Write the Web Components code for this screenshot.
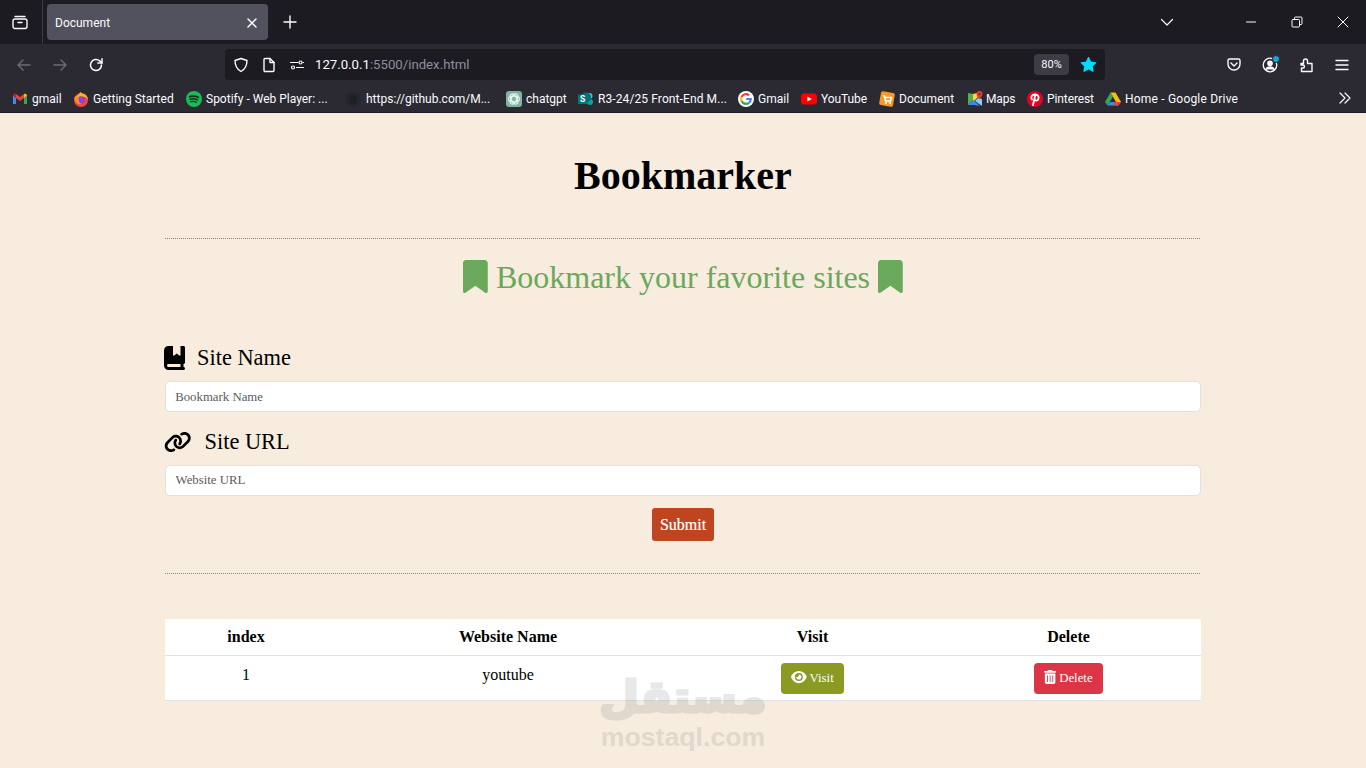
<!DOCTYPE html>
<html lang="en"><head><meta charset="utf-8"><title>Document</title>
<style>
html,body{margin:0;padding:0;height:100%;overflow:hidden;background:#f7ecde}
body{display:flex;flex-direction:column;height:768px;position:relative}
</style></head><body>
<browser-tabs></browser-tabs>
<browser-nav></browser-nav>
<bookmarks-bar>
  <bm-item w="29"><svg slot="icon" viewBox="0 0 16 16"><path fill="#4285f4" d="M1 4v9h3V7z"/><path fill="#34a853" d="M12 7v6h3V4z"/><path fill="#ea4335" d="M4 7V3l4 3 4-3v4L8 10z"/><path fill="#c5221f" d="M1 4.5C1 3 3 2.300 4 3v4z"/><path fill="#fbbc04" d="M15 4.500C15 3 13 2.300 12 3v4z"/></svg>gmail</bm-item>
  <bm-item w="81"><svg slot="icon" viewBox="0 0 16 16"><circle cx="8" cy="9" r="7" fill="#f0453f"/><path fill="#ffb01f" d="M1 8c1-3 3-3 4-4 1-1 2-2 2-3 2 1 3 2 4 2 3 1 4 4 4 6-1-2-3-4-6-3z"/><circle cx="8" cy="9" r="3.800" fill="#8a45d6"/><path fill="#ff8a1f" d="M1.500 8C3 5 5 6 6 6 5 9 6 12 9 13c-4 1-7-1-7.500-5z"/></svg>Getting Started</bm-item>
  <bm-item w="122"><svg slot="icon" viewBox="0 0 16 16"><circle cx="8" cy="8" r="8" fill="#1db954"/><g fill="none" stroke="#14301f" stroke-linecap="round"><path stroke-width="1.700" d="M3.500 5.600c3-.9 6-.7 9 .8"/><path stroke-width="1.400" d="M4 8.200c2.600-.7 5-.5 7.500.7"/><path stroke-width="1.200" d="M4.500 10.600c2.200-.5 4-.4 6 .6"/></g></svg>Spotify - Web Player: ...</bm-item>
  <bm-item w="128" gap="5" lead="17"><svg slot="icon" viewBox="0 0 16 16"><circle cx="8" cy="8" r="7.500" fill="#24252e"/><path fill="#1f2026" d="M5 13V11C3 11 3 9 2.500 9 4 9 4 10 5 10c0-1-1-1-1-3 0-1 .5-1.500.5-1.500S4.300 4.500 4.800 4C5.500 4 6 4.500 6.500 4.700c1-.2 2-.2 3 0C10 4.500 10.500 4 11.200 4c.5.500.3 1.500.3 1.500s.5.500.5 1.500c0 2-1 2-1.500 3 .5.500.5 1 .5 1.500V13z"/></svg>https://github.com/M...</bm-item>
  <bm-item w="40"><svg slot="icon" viewBox="0 0 16 16"><rect width="16" height="16" rx="3" fill="#7fb5a3"/><g fill="none" stroke="#e8f3ee" stroke-width="1.200"><ellipse cx="8" cy="8" rx="5.500" ry="2.800"/><ellipse cx="8" cy="8" rx="5.500" ry="2.800" transform="rotate(60 8 8)"/><ellipse cx="8" cy="8" rx="5.500" ry="2.800" transform="rotate(120 8 8)"/></g></svg>chatgpt</bm-item>
  <bm-item w="128" ls=".1"><svg slot="icon" viewBox="0 0 16 16"><circle cx="11.500" cy="5" r="3" fill="#37c6d0"/><circle cx="12" cy="11" r="3" fill="#1a9ba1"/><circle cx="8" cy="6.500" r="5" fill="#036c70"/><rect x="0" y="3.500" width="9.500" height="9.500" rx="1" fill="#03787c"/><text x="4.700" y="11.300" font-size="8.500" font-weight="700" fill="#fff" text-anchor="middle" font-family="Roboto,sans-serif">S</text></svg>R3-24/25 Front-End M...</bm-item>
  <bm-item w="31"><svg slot="icon" viewBox="0 0 16 16"><circle cx="8" cy="8" r="8" fill="#fff"/><path fill="none" stroke="#ea4335" stroke-width="2.200" d="M3.600 6a4.800 4.800 0 0 1 7.500-1.700"/><path fill="none" stroke="#fbbc04" stroke-width="2.200" d="M3.600 6a4.800 4.800 0 0 0 0 4"/><path fill="none" stroke="#34a853" stroke-width="2.200" d="M3.600 10a4.800 4.800 0 0 0 7.300 1.800"/><path fill="none" stroke="#4285f4" stroke-width="2.200" d="M10.900 11.800A4.800 4.800 0 0 0 12.800 8H8.200"/></svg>Gmail</bm-item>
  <bm-item w="46" ls="-.1"><svg slot="icon" viewBox="0 0 16 16"><rect y="2.500" width="16" height="11" rx="3.200" fill="#f00"/><path fill="#fff" d="M6.400 5.500 10.800 8l-4.400 2.500z"/></svg>YouTube</bm-item>
  <bm-item w="56"><svg slot="icon" viewBox="0 0 16 16"><rect x="1" y="1" width="14" height="14" rx="2" fill="#f39a2b" transform="rotate(10 8 8)"/><path fill="none" stroke="#fff" stroke-width="1.400" d="M4 5h1.500l1 5h5l1-3.500H6"/><circle cx="7" cy="12" r="1" fill="#fff"/><circle cx="11" cy="12" r="1" fill="#fff"/></svg>Document</bm-item>
  <bm-item w="29" gap="3" ls="-.15"><svg slot="icon" viewBox="0 0 16 16"><path fill="#4caf50" d="M1 2l5 1v6l-5 5z"/><path fill="#fdd835" d="M6 3l4-1 2 3-6 6z"/><path fill="#4285f4" d="M1 14l5-5 7 6-6-1z"/><path fill="#90caf9" d="M8 10l3-3 4 1v7z"/><path fill="#e53935" d="M12.500 0a3 3 0 0 0-3 3c0 2 3 5 3 5s3-3 3-5a3 3 0 0 0-3-3z"/><circle cx="12.500" cy="3" r="1" fill="#7f1d1d"/></svg>Maps</bm-item>
  <bm-item w="46" ls="-.1"><svg slot="icon" viewBox="0 0 16 16"><circle cx="8" cy="8" r="8" fill="#e60023"/><path fill="none" stroke="#fff" stroke-width="1.800" stroke-linecap="round" d="M5 8.500c-1.500-2-.5-5 3-5 3 0 4 2 3.500 4-.4 2-2.500 2.800-3.500 1.500M8 5.500 6 14"/></svg>Pinterest</bm-item>
  <bm-item w="114" ls=".2"><svg slot="icon" viewBox="0 0 16 16"><path fill="#fbbc04" d="M5.500 1.500h5L16 11h-5z"/><path fill="#34a853" d="M5.500 1.500 0 11l2.500 3.500L8 5.800z"/><path fill="#4285f4" d="M2.500 14.500h11L16 11H5z"/><path fill="#ea4335" d="M10 11h6l-2.500 3.500H8z"/></svg>Home - Google Drive</bm-item>
</bookmarks-bar>
<page-main></page-main>
<stamp-mark></stamp-mark>

<script>
const ICON={
bookmark:['0 0 384 512','M0 48V487.7C0 501.1 10.9 512 24.3 512c5 0 9.900-1.500 14-4.400L192 400 345.700 507.600c4.100 2.900 9 4.400 14 4.400c13.400 0 24.300-10.900 24.300-24.300V48c0-26.500-21.500-48-48-48H48C21.500 0 0 21.500 0 48z'],
book:['0 0 448 512','M0 96C0 43 43 0 96 0h96V190.700c0 13.400 15.500 20.900 26 12.500L272 160l54 43.200c10.500 8.400 26 .9 26-12.500V0h32 32c17.700 0 32 14.300 32 32V352c0 17.700-14.300 32-32 32v64c17.700 0 32 14.300 32 32s-14.300 32-32 32H384 96c-53 0-96-43-96-96V96zM64 416c0 17.700 14.300 32 32 32H352V384H96c-17.700 0-32 14.300-32 32z'],
link:['0 0 640 512','M579.800 267.700c56.500-56.500 56.500-148 0-204.500c-50-50-128.800-56.500-186.300-15.400l-1.600 1.100c-14.400 10.300-17.700 30.300-7.400 44.600s30.300 17.700 44.600 7.400l1.600-1.100c32.100-22.900 76-19.300 103.800 8.600c31.500 31.500 31.500 82.500 0 114L422.300 334.800c-31.500 31.500-82.500 31.500-114 0c-27.900-27.900-31.500-71.800-8.600-103.800l1.100-1.600c10.300-14.400 6.900-34.400-7.400-44.600s-34.400-6.900-44.600 7.400l-1.100 1.600C206.500 251.200 213 330 263 380c56.500 56.500 148 56.500 204.500 0L579.800 267.700zM60.200 244.300c-56.500 56.500-56.500 148 0 204.500c50 50 128.800 56.500 186.300 15.400l1.600-1.100c14.400-10.300 17.700-30.300 7.400-44.600s-30.300-17.700-44.600-7.400l-1.600 1.100c-32.100 22.900-76 19.300-103.800-8.600C74 372 74 321 105.500 289.500L217.700 177.200c31.500-31.500 82.500-31.500 114 0c27.900 27.900 31.500 71.800 8.600 103.900l-1.100 1.600c-10.300 14.400-6.900 34.400 7.400 44.600s34.400 6.900 44.600-7.400l1.100-1.600C433.500 260.800 427 182 377 132c-56.500-56.500-148-56.500-204.500 0L60.200 244.300z'],
eye:['0 0 576 512','M288 32c-80.800 0-145.500 36.800-192.600 80.600C48.600 156 17.300 208 2.500 243.700c-3.300 7.900-3.300 16.700 0 24.600C17.300 304 48.600 356 95.400 399.400C142.500 443.200 207.200 480 288 480s145.500-36.800 192.600-80.600c46.800-43.500 78.100-95.400 93-131.100c3.300-7.900 3.300-16.700 0-24.600c-14.900-35.700-46.200-87.700-93-131.100C433.500 68.800 368.800 32 288 32zM144 256a144 144 0 1 1 288 0 144 144 0 1 1 -288 0zm144-64c0 35.300-28.700 64-64 64c-7.100 0-13.900-1.200-20.300-3.300c-5.500-1.800-11.900 1.600-11.700 7.400c.3 6.900 1.300 13.800 3.200 20.700c13.700 51.200 66.400 81.600 117.600 67.900s81.600-66.400 67.900-117.600c-11.100-41.500-47.800-69.400-88.600-71.100c-5.800-.2-9.200 6.100-7.400 11.700c2.100 6.400 3.300 13.200 3.300 20.300z'],
trash:['0 0 448 512','M135.200 17.700C140.600 6.800 151.700 0 163.800 0H284.200c12.100 0 23.200 6.800 28.600 17.700L320 32h96c17.700 0 32 14.300 32 32s-14.300 32-32 32H32C14.300 96 0 81.700 0 64S14.300 32 32 32h96l7.200-14.300zM32 128H416V448c0 35.300-28.700 64-64 64H96c-35.300 0-64-28.700-64-64V128zm96 64c-8.800 0-16 7.200-16 16V432c0 8.800 7.200 16 16 16s16-7.200 16-16V208c0-8.800-7.200-16-16-16zm96 0c-8.800 0-16 7.200-16 16V432c0 8.800 7.200 16 16 16s16-7.200 16-16V208c0-8.800-7.200-16-16-16zm96 0c-8.800 0-16 7.200-16 16V432c0 8.800 7.200 16 16 16s16-7.200 16-16V208c0-8.800-7.200-16-16-16z']
};
const fa=(n,h)=>`<svg viewBox="${ICON[n][0]}" height="${h}" fill="currentColor" style="display:block;flex:none"><path d="${ICON[n][1]}"/></svg>`;
const UI='"Roboto","Open Sans",sans-serif';
const line=(d,s=1.5,c='#fbfbfe')=>`<svg viewBox="0 0 16 16" width="16" height="16" fill="none" stroke="${c}" stroke-width="${s}" stroke-linecap="round" stroke-linejoin="round" style="display:block;flex:none">${d}</svg>`;
class Base extends HTMLElement{
  constructor(){super();this.attachShadow({mode:'open'})}
  connectedCallback(){this.shadowRoot.innerHTML=this.render()}
}
class BrowserTabs extends Base{render(){return `<style>
:host{display:flex;align-items:center;height:44px;background:#1c1b22;color:#fbfbfe;font:12px ${UI};flex:none}
.view{width:40px;padding-right:2px;height:44px;display:flex;align-items:center;justify-content:center;border-right:1px solid #3a3944}
.tab{margin-left:4px;width:221px;height:36px;background:#52525e;border-radius:4px;display:flex;align-items:center;padding:1px 8px 0 8px;box-sizing:border-box;justify-content:space-between}
.plus{margin-left:14px}
.sp{flex:1}
.ctl{display:flex;align-items:center}
</style>
<div class="view">${line('<rect x="1" y="5" width="14" height="9.500" rx="2"/><path d="M3 2.500h10M6 8.500h4"/>',1.4)}</div>
<div class="tab"><span>Document</span>${line('<path d="M4 4l8 8M12 4l-8 8"/>',1.5)}</div>
<div class="plus">${line('<path d="M8 2v12M2 8h12"/>',1.4)}</div>
<div class="sp"></div>
<div class="ctl" style="margin-right:68px">${line('<path d="M2.500 5.500 8 11l5.500-5.500"/>',1.2)}</div>
<div class="ctl" style="margin-right:30px">${line('<path d="M3.500 8h9"/>',1)}</div>
<div class="ctl" style="margin-right:30px">${line('<rect x="3" y="5.500" width="7.500" height="7.500" rx="1"/><path d="M5.500 5.500V4a1 1 0 0 1 1-1h5.500a1 1 0 0 1 1 1v5.500a1 1 0 0 1-1 1h-1.500"/>',1)}</div>
<div class="ctl" style="margin-right:15px">${line('<path d="M3 3l10 10M13 3 3 13"/>',1)}</div>`}}
class BrowserNav extends Base{render(){return `<style>
:host{display:flex;align-items:center;height:40px;background:#2b2a33;color:#fbfbfe;font:13.200px ${UI};flex:none;box-sizing:border-box;padding-top:1px}
.i{display:flex}
.url{margin-left:121px;width:880px;height:31px;background:#1c1b22;border-radius:4px;display:flex;align-items:center;box-sizing:border-box;padding:0 8px}
.addr{margin-left:10px;flex:1;white-space:nowrap}
.addr b{font-weight:400;color:#8f8f9d}
.zoom{width:35px;height:21px;background:#3c3b46;border-radius:4px;font-size:11px;display:flex;align-items:center;justify-content:center}
.dot{position:absolute;right:-2px;top:-2px;width:6px;height:6px;border-radius:50%;background:#1aa6d8;border:1px solid #2b2a33}
</style>
<div class="i" style="margin-left:16px">${line('<path d="M14 8H2M7 3 2 8l5 5"/>',1.4,'#6d6c76')}</div>
<div class="i" style="margin-left:20px">${line('<path d="M2 8h12M9 3l5 5-5 5"/>',1.4,'#6d6c76')}</div>
<div class="i" style="margin-left:20px">${line('<path d="M13.500 8a5.500 5.500 0 1 1-1.800-4.100L14 6"/><path d="M14 1.800V6H9.800" />',1.5)}</div>
<div class="url">
 <div class="i">${line('<path d="M8 1.500 14 3.500c0 5-1.500 8.500-6 11-4.500-2.500-6-6-6-11z"/>',1.4)}</div>
 <div class="i" style="margin-left:12px">${line('<path d="M3 2.500a1 1 0 0 1 1-1h5l4 4v8a1 1 0 0 1-1 1H4a1 1 0 0 1-1-1z"/><path d="M9 1.500v4h4"/>',1.4)}</div>
 <div class="i" style="margin-left:12px">${line('<circle cx="4" cy="10.500" r="1.500"/><circle cx="11.500" cy="5.500" r="1.500"/><path d="M1.500 5.500H9M7.500 10.500h7M14 5.500h.5"/>',1.2)}</div>
 <div class="addr">127.0.0.1<b>:5500/index.html</b></div>
 <div class="zoom">80%</div>
 <div class="i" style="margin-left:11px"><svg viewBox="0 0 16 16" width="17" height="17" style="display:block"><path fill="#00ddff" stroke="#00ddff" stroke-linejoin="round" stroke-width="1.200" d="M8 1.500l2 4.300 4.700.6-3.400 3.200.9 4.700L8 12l-4.200 2.300.9-4.700L1.300 6.400 6 5.800z"/></svg></div>
</div>
<div class="i" style="margin-left:121px">${line('<path d="M2 3.500a1.500 1.500 0 0 1 1.500-1.500h9A1.500 1.500 0 0 1 14 3.500V7a6 6 0 0 1-12 0z"/><path d="M5 6l3 3 3-3"/>',1.4)}</div>
<div class="i" style="margin-left:20px;position:relative">${line('<circle cx="8" cy="8" r="6.800"/><circle cx="8" cy="6.300" r="2.200" fill="#fbfbfe"/><path d="M3.800 12.500c1-2 2.500-2.500 4.200-2.500s3.200.5 4.200 2.500" fill="#fbfbfe"/>',1.3)}<span class="dot"></span></div>
<div class="i" style="margin-left:20px">${line('<path d="M3 6.500h2.500V4a2 2 0 0 1 4 0v2.500h4.500V14.500H3.500V11H5a1.500 1.500 0 0 0 0-3H3z"/>',1.4)}</div>
<div class="i" style="margin-left:20px">${line('<path d="M2 3.500h12M2 8h12M2 12.500h12"/>',1.4)}</div>`}}
class BookmarksBar extends Base{render(){return `<style>
:host{display:flex;align-items:center;height:29px;background:#2b2a33;flex:none;padding:1px 0 0 12px;box-sizing:border-box;border-bottom:1px solid #1c1b22;gap:12px;position:relative}
.more{position:absolute;right:13px;top:6px}
</style><slot></slot><div class="more">${line('<path d="M3 3l5 5-5 5M8 3l5 5-5 5"/>',1.2)}</div>`}}
class BmItem extends Base{render(){const g=this.getAttribute('gap')||4,l=this.getAttribute('lead');return `<style>
:host{display:flex;align-items:center;gap:${g}px;color:#fbfbfe;font:12px ${UI};white-space:nowrap;letter-spacing:${this.getAttribute('ls')||0}px;${l?`margin-left:${+l-12}px;`:''}}
::slotted(svg){width:16px;height:16px;display:block;flex:none}
.t{display:block;width:${this.getAttribute('w')}px}
</style><slot name="icon"></slot><span class="t"><slot></slot></span>`}}
class PageMain extends Base{render(){return `<style>
:host{display:block;flex:1;background:#f7ecde;font-family:"Liberation Serif","Times New Roman",serif;color:#000}
.wrap{width:1036px;margin:0 auto}
h1{margin:0;padding:39px 0 38px;font-size:40px;line-height:48px;font-weight:700;text-align:center}
hr{border:0;border-top:1px dotted #8a8580;margin:0 1px 0 0}
h2{margin:18px 0 0;font-size:32px;line-height:38px;font-weight:400;color:#6aa85b;display:flex;justify-content:center;align-items:center;gap:8px;height:38px}
h2 span{position:relative;top:1px}
</style>
<div class="wrap">
<h1>Bookmarker</h1>
<hr>
<h2>${fa('bookmark',33)}<span>Bookmark your favorite sites</span>${fa('bookmark',33)}</h2>
<form-field icon="book" label="Site Name" gap="12" holder="Bookmark Name" top="49" pad="1px 9.6px 0 9.2px"></form-field>
<form-field icon="link" label="Site URL" gap="13" holder="Website URL" top="16" pad="0 9.6px"></form-field>
<submit-button>Submit</submit-button>
<hr style="margin-top:32px">
<links-table></links-table>
</div>`}}
class FormField extends Base{render(){const a=k=>this.getAttribute(k);return `<style>
:host{display:block;margin-top:${a('top')}px}
label{display:flex;align-items:center;gap:${a('gap')}px;font-size:22.400px;line-height:27px;height:27px;margin:0 0 10px -1px}
input{display:block;width:100%;height:31px;box-sizing:border-box;border:1px solid #dee2e6;border-radius:5px;background:#fff;padding:${a('pad')};font:12.800px "Liberation Serif",serif;color:#212529;outline:0}
input::placeholder{color:#595c5f;opacity:1}
</style><label>${a('icon')==='book'?`<span style="display:flex;color:#000">${fa('book',24)}</span>`:`<span style="display:flex;color:#000">${fa('link',22)}</span>`}<span>${a('label')}</span></label><input placeholder="${a('holder')}">`}}
class SubmitButton extends Base{render(){return `<style>
:host{display:flex;justify-content:center;margin-top:12px}
button{width:62px;height:33px;background:#bf4420;color:#fff;border:0;border-radius:3px;font:400 16px "Liberation Serif",serif;padding:0;-webkit-text-stroke:.2px #fff}
</style><button><slot></slot></button>`}}
class LinksTable extends Base{render(){return `<style>
:host{display:block;margin-top:45px;background:#fff;font-size:16px}
.r{display:grid;grid-template-columns:162px 362px 247px 265px;text-align:center;align-items:center}
.h{height:37px;font-weight:700;border-bottom:1px solid #dee2e6;box-sizing:border-box;padding-bottom:1px}
.b{height:45px;border-bottom:1px solid #dee2e6;box-sizing:border-box}
.b>div{display:flex;justify-content:center;align-items:center}
.t{padding-bottom:6px}
</style>
<div class="r h"><div>index</div><div>Website Name</div><div>Visit</div><div>Delete</div></div>
<div class="r b"><div class="t">1</div><div class="t">youtube</div><div><action-button tone="#8a9a22" icon="eye" w="63">Visit</action-button></div><div><action-button tone="#dc3545" icon="trash" w="69">Delete</action-button></div></div>`}}
class ActionButton extends Base{render(){const a=k=>this.getAttribute(k);return `<style>
:host{display:inline-flex;align-items:center;justify-content:center;gap:2.500px;width:${a('w')}px;height:31px;box-sizing:border-box;background:${a('tone')};color:#fff;border-radius:4px;font:12.800px "Liberation Serif",serif}
.ic{display:flex;margin-bottom:2px}
</style><span class="ic">${fa(a('icon'),14)}</span><slot></slot>`}}
class StampMark extends Base{render(){return `<style>
:host{position:absolute;left:560px;top:671px;width:246px;text-align:center;pointer-events:none;color:#828282;opacity:.18}
.ar{font:700 44px/51px "DejaVu Sans",sans-serif;transform:scaleX(1.04);-webkit-text-stroke:3px #828282}
.en{font:700 26.700px/31px "Liberation Sans",sans-serif}
</style><div class="ar">مستقل</div><div class="en">mostaql.com</div>`}}
customElements.define('browser-tabs',BrowserTabs);
customElements.define('browser-nav',BrowserNav);
customElements.define('bookmarks-bar',BookmarksBar);
customElements.define('bm-item',BmItem);
customElements.define('page-main',PageMain);
customElements.define('form-field',FormField);
customElements.define('submit-button',SubmitButton);
customElements.define('links-table',LinksTable);
customElements.define('action-button',ActionButton);
customElements.define('stamp-mark',StampMark);
</script>
</body></html>
